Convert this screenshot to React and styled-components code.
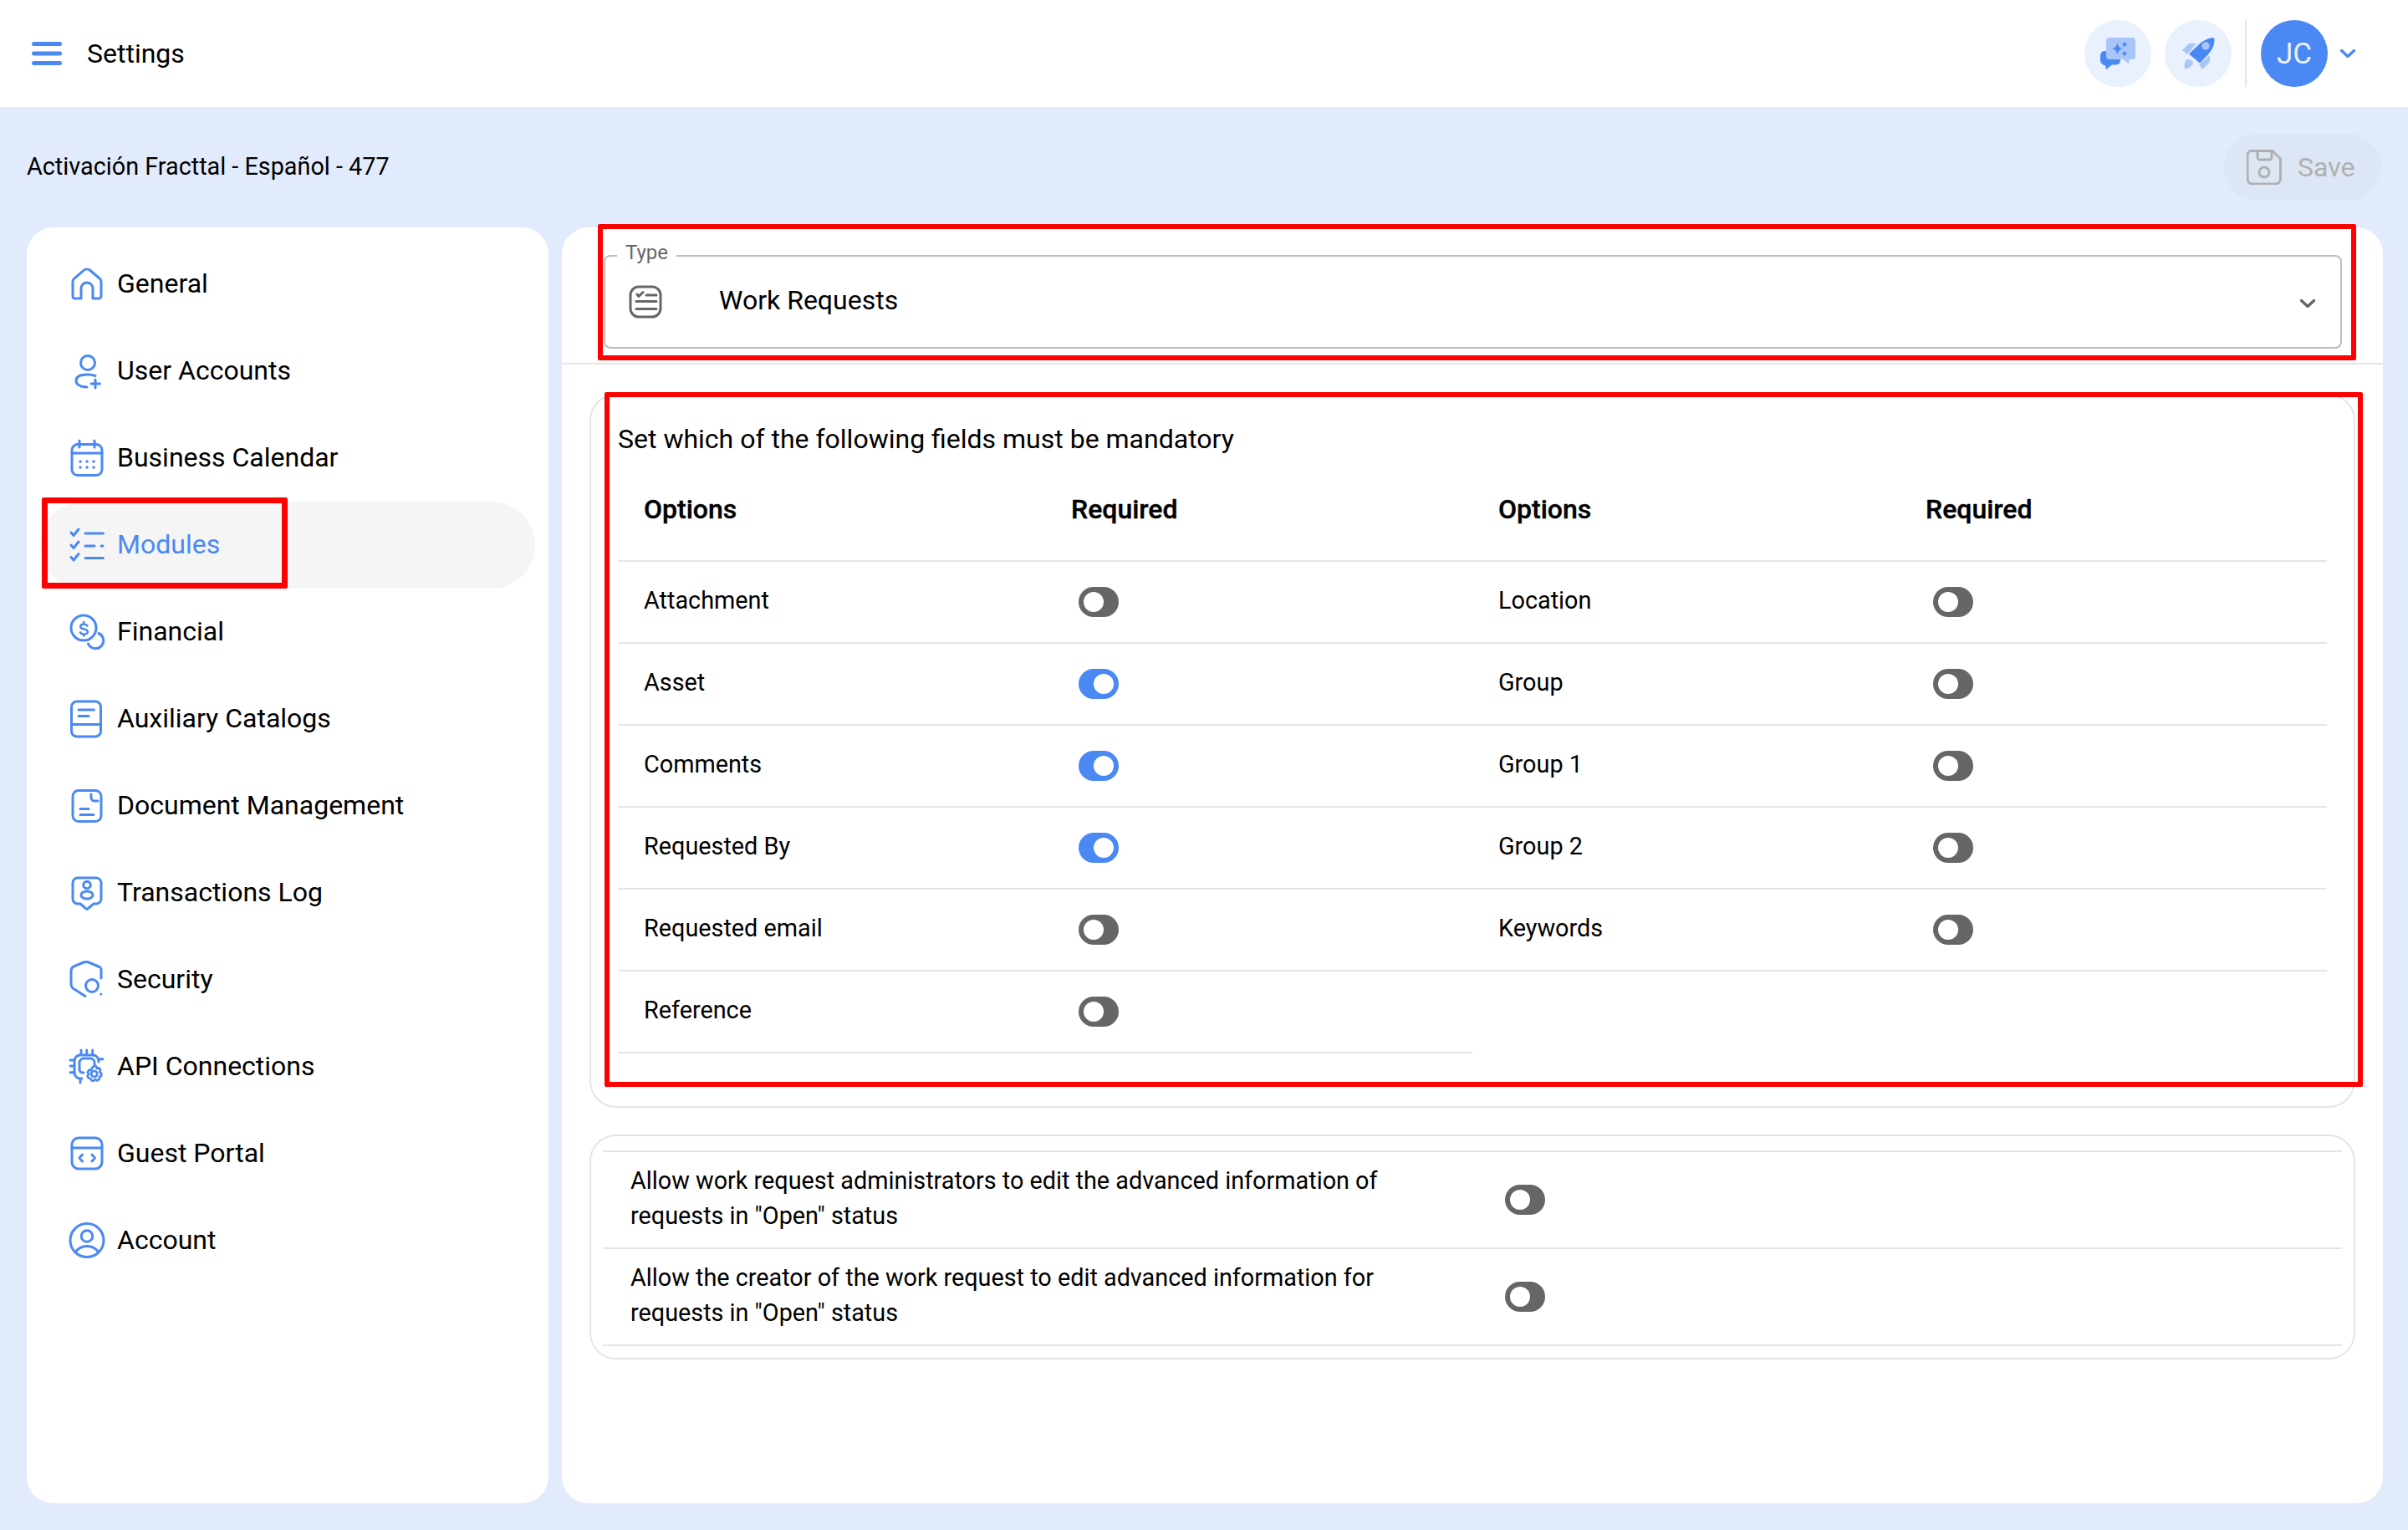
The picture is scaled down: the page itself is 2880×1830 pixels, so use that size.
import React from "react";
import styled, { createGlobalStyle } from "styled-components";

const BLUE = "#4a89f3";
const LIGHT = "#a9c6f8";

const Global = createGlobalStyle`
  html, body { margin: 0; padding: 0; background: #e2ebfc; }
  * { box-sizing: border-box; }
  #root { font-family: Roboto, "Liberation Sans", sans-serif; color: #000; }
`;

const Page = styled.div`
  width: 2880px;
  height: 1830px;
  display: flex;
  flex-direction: column;
  overflow: hidden;
`;
const TopBar = styled.header`
  height: 128px;
  flex: none;
  background: #fff;
  display: flex;
  align-items: center;
  justify-content: space-between;
  padding: 0 63px 0 38px;
`;
const TopLeft = styled.div`
  display: flex;
  align-items: center;
  gap: 30px;
`;
const PageTitle = styled.div`
  font-size: 32px;
  line-height: 40px;
  margin-top: -1px;
`;
const TopRight = styled.div`
  display: flex;
  align-items: center;
`;
const RoundButton = styled.div`
  width: 80px;
  height: 80px;
  border-radius: 50%;
  background: #e9f1fe;
  display: flex;
  align-items: center;
  justify-content: center;
  margin-right: 16px;
`;
const VDivider = styled.div`
  width: 2px;
  height: 80px;
  background: #e5e5e5;
  margin-right: 17px;
`;
const Avatar = styled.div`
  width: 80px;
  height: 80px;
  border-radius: 50%;
  background: ${BLUE};
  color: #eaf1fe;
  font-size: 35px;
  display: flex;
  align-items: center;
  justify-content: center;
  margin-right: 15px;
`;
const SubBar = styled.div`
  height: 144px;
  flex: none;
  display: flex;
  align-items: center;
  justify-content: space-between;
  padding: 0 32px 0 32px;
`;
const Company = styled.div`
  font-size: 28.8px;
  line-height: 36px;
  margin-top: -3px;
`;
const SaveButton = styled.div`
  width: 188px;
  height: 80px;
  border-radius: 40px;
  background: #dce6f5;
  color: #b0b0b0;
  display: flex;
  align-items: center;
  gap: 19px;
  padding-left: 27px;
  font-size: 32px;
`;
const Columns = styled.div`
  flex: 1;
  display: flex;
  gap: 16px;
  padding: 0 32px 32px;
  min-height: 0;
`;
const Side = styled.nav`
  width: 624px;
  flex: none;
  background: #fff;
  border-radius: 32px;
  padding: 16px;
`;
const NavItem = styled.div`
  position: relative;
  height: 104px;
  display: flex;
  align-items: center;
  gap: 16px;
  padding-left: 36px;
  border-radius: 52px;
  font-size: 32px;
  background: ${(p) => (p.$active ? "#f5f5f5" : "transparent")};
  color: ${(p) => (p.$active ? BLUE : "#000")};
`;
const NavLabel = styled.span`
  margin-top: -3px;
`;
const NavIcon = styled.svg`
  width: 40px;
  height: 40px;
  flex: none;
  overflow: visible;
  fill: none;
  stroke: ${BLUE};
  stroke-width: 3;
  stroke-linecap: round;
  stroke-linejoin: round;
`;
const Main = styled.main`
  position: relative;
  flex: 1;
  background: #fff;
  border-radius: 32px;
  display: flex;
  flex-direction: column;
`;
const TypeSection = styled.div`
  height: 164px;
  flex: none;
  padding: 33px 49px 0 50px;
  border-bottom: 2px solid #e5e5e5;
`;
const Field = styled.div`
  position: relative;
  height: 112px;
  border: 2px solid #bdbdbd;
  border-radius: 8px;
  display: flex;
  align-items: center;
  padding: 0 30px 0 28px;
  font-size: 32px;
`;
const FieldLabel = styled.span`
  position: absolute;
  left: 14px;
  top: -20px;
  background: #fff;
  padding: 0 10px;
  font-size: 24px;
  line-height: 30px;
  color: #666;
`;
const FieldIcon = styled.svg`
  width: 40px;
  height: 40px;
  flex: none;
  margin-right: 68px;
  fill: none;
  stroke: #666;
  stroke-width: 3;
  stroke-linecap: round;
  stroke-linejoin: round;
`;
const FieldValue = styled.span`
  flex: 1;
  margin-top: -4px;
`;
const Chevron = styled.svg`
  flex: none;
  fill: none;
  stroke-width: 3.4;
  stroke-linecap: round;
  stroke-linejoin: round;
  margin-top: ${(p) => p.$drop || 0}px;
`;
const Body = styled.div`
  flex: 1;
  padding: 35px 33px 0;
`;
const Card = styled.section`
  border: 2px solid #e5e5e5;
  border-radius: 32px;
`;
const RequiredCard = styled(Card)`
  height: 854px;
  padding: 29px 32px 0;
`;
const CardTitle = styled.div`
  font-size: 32px;
  line-height: 46px;
`;
const Table = styled.div`
  display: grid;
  grid-template-columns: repeat(4, 511px);
`;
const HeadCell = styled.div`
  height: 124px;
  display: flex;
  align-items: center;
  padding-left: 31px;
  font-size: 32px;
  font-weight: 500;
  -webkit-text-stroke: 0.4px #000;
  border-bottom: 2px solid #e5e5e5;
`;
const Cell = styled.div`
  height: 98px;
  display: flex;
  align-items: center;
  padding-left: ${(p) => (p.$toggle ? "40px" : "31px")};
  font-size: 28.8px;
  border-bottom: 2px solid #e5e5e5;
`;
const CellText = styled.span`
  margin-top: -4px;
`;
const Track = styled.span`
  display: flex;
  align-items: center;
  width: 48px;
  height: 36px;
  border-radius: 18px;
  padding: 0 6px;
  flex: none;
  margin-top: -1px;
  background: ${(p) => (p.$on ? BLUE : "#666")};
  justify-content: ${(p) => (p.$on ? "flex-end" : "flex-start")};
`;
const Knob = styled.span`
  width: 24px;
  height: 24px;
  border-radius: 50%;
  background: #fff;
`;
const OptionsCard = styled(Card)`
  height: 269px;
  margin-top: 32px;
  padding: 17px 14px 0;
`;
const OptionsList = styled.div`
  border-top: 2px solid #e5e5e5;
`;
const OptionRow = styled.div`
  height: 116px;
  display: grid;
  grid-template-columns: 1046px 1fr;
  align-items: center;
  padding-left: 33px;
  border-bottom: 2px solid #e5e5e5;
`;
const OptionText = styled.div`
  font-size: 28.8px;
  line-height: 42px;
  width: 950px;
  margin-top: -4px;
`;
const RedBox = styled.div`
  position: absolute;
  border: ${(p) => p.$b || 6}px solid #f00;
  border-radius: 2px;
  pointer-events: none;
  left: ${(p) => p.$l}px;
  top: ${(p) => p.$t}px;
  width: ${(p) => p.$w}px;
  height: ${(p) => p.$h}px;
`;

const icons = {
  home: (
    <path d="M5 37H13V25a7 7 0 0 1 14 0V37H34a3 3 0 0 0 3-3V17a5 5 0 0 0-2-4L24 3.5a6 6 0 0 0-8 0L5 13a5 5 0 0 0-2 4V34a3 3 0 0 0 2 3Z" />
  ),
  user: (
    <>
      <circle cx="21" cy="10" r="8.5" />
      <path d="M30 25.5Q26 24 20 24C11 24 7 27 7 31.5C7 36 11 38.5 20 39" />
      <path d="M30 30V40M25 35H35.5" />
    </>
  ),
  calendar: (
    <>
      <rect x="2" y="3.5" width="36" height="37" rx="7" />
      <path d="M2 14H38M11 -1V7M29 -1V7" />
      <path d="M12 24h.1M20 24h.1M28 24h.1M12 31h.1M20 31h.1M28 31h.1" strokeWidth="3.4" />
    </>
  ),
  list: (
    <>
      <path d="M1 5L4 8.5L10 1M1 20L4 23.5L10 16M1 34.5L4 38L10 30.5" />
      <path d="M18 6H39.5M18 21H29M37 21H39M18 35.5H39.5" />
    </>
  ),
  money: (
    <>
      <circle cx="16" cy="15" r="15" />
      <path d="M20.500 12.500C19.500 11 18 10.500 16.300 10.500C14 10.500 12.300 11.700 12.300 13.500C12.300 18 20.800 15 20.800 19.700C20.800 21.500 19 22.500 16.300 22.500C14 22.500 12.700 21.500 12 20.300M16.300 8V10.500M16.300 22.500V24.500" strokeWidth="2.6" />
      <path d="M34 21.500A9.500 9.500 0 1 1 21.500 34" />
    </>
  ),
  book: (
    <>
      <rect x="1.5" y="-1" width="35" height="42" rx="6.5" />
      <path d="M1.5 26.5H36.5M10 9H28.5M10 16.5H22" />
    </>
  ),
  doc: (
    <>
      <rect x="3" y="1.5" width="34" height="37" rx="7" />
      <path d="M25 6V10a4 4 0 0 0 4 4H33M12 23.5H22M12 30.5H28" />
    </>
  ),
  log: (
    <>
      <path d="M9 2H31a6 6 0 0 1 6 6V27a6 6 0 0 1-6 6H28L21.5 38.5a2 2 0 0 1-3 0L12 33H9a6 6 0 0 1-6-6V8a6 6 0 0 1 6-6Z" />
      <circle cx="20" cy="10.5" r="4.3" />
      <ellipse cx="20" cy="22.5" rx="7" ry="4.5" />
    </>
  ),
  shield: (
    <>
      <path d="M37 18V8Q37 5.500 35 4.500L22 -1Q19 -2 16 -1L4 4Q1 6 1 9V25Q1 28 3 30L18 39.500" />
      <circle cx="26" cy="27" r="7.500" />
      <path d="M36.700 37h.1" />
    </>
  ),
  chip: (
    <>
      <path d="M14 34H12a7 7 0 0 1-7-7V13a7 7 0 0 1 7-7H27a7 7 0 0 1 7 7V14" />
      <path d="M16 27H15a4 4 0 0 1-4-4V15a5 5 0 0 1 5-5H24a5 5 0 0 1 5 5V17" />
      <path d="M13 0V5M19.700 0V5M26.700 0V5M0 12H5M0 19H5M0 26.700H5M34 10.700H39M12 34V39" />
      <path d="M28.700 18.700L30.800 19.100L31.800 21.800L34.400 21.300L36.200 23.500L35.200 26L37.200 28L37.200 31L35 32L34.800 34.800L32 36.500L30 35L28 36.800L25.600 36.500L24.500 34L21.800 33.500L20.500 31L22.200 28.800L20.800 26.500L22.500 23.800L25 24L26.300 21L28.700 18.700Z" strokeWidth="2.700" />
      <circle cx="28.700" cy="28.500" r="3.500" strokeWidth="2.700" />
    </>
  ),
  portal: (
    <>
      <rect x="2" y="1" width="36" height="37" rx="8" />
      <path d="M2 13H38M14.5 21L11 25L14.5 29M26 21L29.5 25L26 29" />
    </>
  ),
  account: (
    <>
      <circle cx="20" cy="19.5" r="20" />
      <circle cx="20" cy="14.5" r="6.8" />
      <path d="M6 34C10 28 15 26.5 20 26.5C25 26.5 30 28 34 34" />
    </>
  ),
};

const nav = [
  ["General", "home"],
  ["User Accounts", "user"],
  ["Business Calendar", "calendar"],
  ["Modules", "list", true],
  ["Financial", "money"],
  ["Auxiliary Catalogs", "book"],
  ["Document Management", "doc"],
  ["Transactions Log", "log"],
  ["Security", "shield"],
  ["API Connections", "chip"],
  ["Guest Portal", "portal"],
  ["Account", "account"],
];

const rows = [
  ["Attachment", false, "Location", false],
  ["Asset", true, "Group", false],
  ["Comments", true, "Group 1", false],
  ["Requested By", true, "Group 2", false],
  ["Requested email", false, "Keywords", false],
  ["Reference", false, null, false],
];

const Toggle = ({ on }) => (
  <Track $on={on}>
    <Knob />
  </Track>
);

export default function App() {
  return (
    <Page>
      <Global />
      <TopBar>
        <TopLeft>
          <svg width="36" height="28" viewBox="0 0 36 28" fill="none" stroke={BLUE} strokeWidth="5" strokeLinecap="round">
            <path d="M2.5 2.5H33.5M2.5 14H33.5M2.5 25.5H33.5" />
          </svg>
          <PageTitle>Settings</PageTitle>
        </TopLeft>
        <TopRight>
          <RoundButton>
            <svg width="42" height="38" viewBox="0 0 42 38">
              <path fill={BLUE} d="M5 16H19a5 5 0 0 1 5 5V27Q24 32 19 32.500H14L7 38L6 33.500Q0 32 0 27V21a5 5 0 0 1 5-5Z" />
              <path fill={LIGHT} d="M11 0H38a4 4 0 0 1 4 4V22a4 4 0 0 1-4 4H35L34 31L27 26H11a4 4 0 0 1-4-4V4a4 4 0 0 1 4-4Z" />
              <path fill={BLUE} d="M14 13Q19 12.500 20.300 6.500Q21.600 12.500 27 13Q21.600 14 20.300 20Q19 14 14 13ZM25.500 8Q28 7.500 29 4.500Q30 7.500 32.500 8Q30 8.500 29 11.500Q28 8.500 25.500 8ZM25.500 19Q28 18.500 29 15.500Q30 18.500 32.500 19Q30 19.500 29 22.500Q28 19.500 25.500 19Z" />
            </svg>
          </RoundButton>
          <RoundButton>
            <svg width="39" height="38" viewBox="0 0 39 38">
              <path fill={LIGHT} d="M0 15L8 7H17L6 20ZM20 32L33 21V29L24 38ZM3 37.500C2 32 3 27 6 26C10 26 13 28 13 30C11 35 8 37 3 37.500Z" />
              <path fill={BLUE} d="M36 0Q39 0 38.500 4Q38 12 31 20L21 30.500L8 19.500L19 9Q26 2 36 0Z" />
              <circle cx="28" cy="10" r="4.700" fill={LIGHT} />
            </svg>
          </RoundButton>
          <VDivider />
          <Avatar>JC</Avatar>
          <Chevron width="18" height="10" viewBox="0 0 18 10" stroke={BLUE}>
            <path d="M1.500 1.500L9 8.500L16.500 1.500" />
          </Chevron>
        </TopRight>
      </TopBar>
      <SubBar>
        <Company>Activación Fracttal - Español - 477</Company>
        <SaveButton>
          <svg width="42" height="42" viewBox="0 0 42 42" fill="none" stroke="#b0b0b0" strokeWidth="3">
            <path d="M7 1.500H31L40.500 11V35a6 6 0 0 1-6 6H7a6 6 0 0 1-6-6V7a6 6 0 0 1 6-6Z" />
            <path d="M13 1.500V9a3 3 0 0 0 3 3H27a3 3 0 0 0 3-3V2" />
            <circle cx="21" cy="27" r="6" />
          </svg>
          Save
        </SaveButton>
      </SubBar>
      <Columns>
        <Side>
          {nav.map(([label, icon, active]) => (
            <NavItem key={label} $active={active}>
              <NavIcon viewBox="0 0 40 40">{icons[icon]}</NavIcon>
              <NavLabel>{label}</NavLabel>
              {active && <RedBox $b={7} $l={2} $t={-5} $w={294} $h={109} />}
            </NavItem>
          ))}
        </Side>
        <Main>
          <TypeSection>
            <Field>
              <FieldLabel>Type</FieldLabel>
              <FieldIcon viewBox="0 0 40 40">
                <rect x="2" y="2" width="36" height="36" rx="10" />
                <path d="M10 11L12 13.500L17 8.500M21 12H33M9 19.500H33M9 28.500H33" />
              </FieldIcon>
              <FieldValue>Work Requests</FieldValue>
              <Chevron $drop={3} width="18" height="10" viewBox="0 0 18 10" stroke="#666">
                <path d="M1.500 1.500L9 8.500L16.500 1.500" />
              </Chevron>
            </Field>
          </TypeSection>
          <Body>
            <RequiredCard>
              <CardTitle>Set which of the following fields must be mandatory</CardTitle>
              <Table>
                <HeadCell>Options</HeadCell>
                <HeadCell>Required</HeadCell>
                <HeadCell>Options</HeadCell>
                <HeadCell>Required</HeadCell>
                {rows.map(([a, aOn, b, bOn]) => (
                  <React.Fragment key={a}>
                    <Cell><CellText>{a}</CellText></Cell>
                    <Cell $toggle><Toggle on={aOn} /></Cell>
                    {b && <Cell><CellText>{b}</CellText></Cell>}
                    {b && <Cell $toggle><Toggle on={bOn} /></Cell>}
                  </React.Fragment>
                ))}
              </Table>
            </RequiredCard>
            <OptionsCard>
              <OptionsList>
                <OptionRow>
                  <OptionText>Allow work request administrators to edit the advanced information of requests in "Open" status</OptionText>
                  <Toggle on={false} />
                </OptionRow>
                <OptionRow>
                  <OptionText>Allow the creator of the work request to edit advanced information for requests in "Open" status</OptionText>
                  <Toggle on={false} />
                </OptionRow>
              </OptionsList>
            </OptionsCard>
          </Body>
          <RedBox $l={43} $t={-4} $w={2103} $h={163} />
          <RedBox $l={51} $t={197} $w={2103} $h={831} />
        </Main>
      </Columns>
    </Page>
  );
}
